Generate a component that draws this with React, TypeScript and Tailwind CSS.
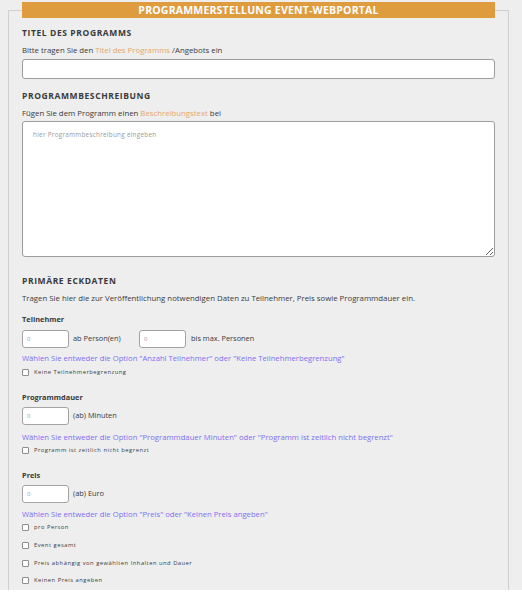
import React from "react";

// Programmerstellung: Formular für das Event-Webportal
const heading = "text-[8.5px] font-bold tracking-[0.6px] leading-[12px] text-[#3a3a3a] uppercase";
const para = "text-[7.8px] leading-[10px] text-[#3a3a3a]";
const label = "text-[7.4px] font-bold leading-[10px] text-[#3a3a3a]";
const hint = "text-[7.7px] leading-[10px] text-[#7f6ff3]";
const smallInput =
  "w-[47px] h-[18px] rounded-[3px] border border-[#a3a3a3] bg-white px-[4px] text-[6px] text-[#555] placeholder:text-[#9a9a9a] outline-none";

function Check({ text, className }: { text: string; className?: string }) {
  return (
    <label className={`flex items-center h-[10px] ${className ?? ""}`}>
      <span className="w-[7px] h-[7px] rounded-[1px] border border-[#8c8c8c] bg-white shrink-0" />
      <span className="ml-[5px] text-[5.8px] tracking-[0.5px] leading-[10px] text-[#3a3a3a]">{text}</span>
    </label>
  );
}

function NumberRow({ unit, unitWidth, children }: { unit: string; unitWidth?: string; children?: React.ReactNode }) {
  return (
    <div className="flex items-center">
      <input className={smallInput} placeholder="0" />
      <span className={`ml-[4px] text-[7.4px] text-[#3a3a3a] ${unitWidth ?? ""}`}>{unit}</span>
      {children}
    </div>
  );
}

export default function App() {
  return (
    <div
      className="h-[590px] overflow-hidden bg-[#eeeeee] pt-[2px]"
      style={{ fontFamily: '"Open Sans", "Liberation Sans", sans-serif' }}
    >
      <fieldset className="ml-[8px] mr-[13px] border border-b-0 border-[#cfcfcf] px-[13px] min-h-[700px]">
        <legend className="w-full h-[16px] bg-[#df9c3f] text-white text-center text-[10.5px] font-bold leading-[16px] tracking-[0.2px]">
          PROGRAMMERSTELLUNG EVENT-WEBPORTAL
        </legend>

        {/* Titel */}
        <h2 className={`${heading} mt-[9px]`}>Titel des Programms</h2>
        <p className={`${para} mt-[6px]`}>
          Bitte tragen Sie den <span className="text-[#e6a66a]">Titel des Programms</span> /Angebots ein
        </p>
        <input className="mt-[4px] block w-full h-[20px] rounded-[3px] border border-[#9c9c9c] bg-white outline-none" />

        {/* Beschreibung */}
        <h2 className={`${heading} mt-[11px]`}>Programmbeschreibung</h2>
        <p className={`${para} mt-[6px]`}>
          Fügen Sie dem Programm einen <span className="text-[#e6a66a]">Beschreibungstext</span> bei
        </p>
        <textarea
          className="mt-[3px] block w-full h-[136px] rounded-[3px] border border-[#9c9c9c] bg-white px-[10px] py-[8px] text-[6.3px] tracking-[0.3px] placeholder:text-[#9a9a9a] outline-none"
          placeholder="hier Programmbeschreibung eingeben"
        />

        {/* Eckdaten */}
        <h2 className={`${heading} mt-[18px]`}>Primäre Eckdaten</h2>
        <p className={`${para} mt-[6px]`}>
          Tragen Sie hier die zur Veröffentlichung notwendigen Daten zu Teilnehmer, Preis sowie Programmdauer ein.
        </p>

        <div className={`${label} mt-[11px]`}>Teilnehmer</div>
        <div className="mt-[6px]">
          <NumberRow unit="ab Person(en)" unitWidth="w-[66px]">
            <input className={smallInput} placeholder="0" />
            <span className="ml-[5px] text-[7.4px] text-[#3a3a3a]">bis max. Personen</span>
          </NumberRow>
        </div>
        <p className={`${hint} mt-[5px]`}>
          Wählen Sie entweder die Option "Anzahl Teilnehmer" oder "Keine Teilnehmerbegrenzung"
        </p>
        <Check text="Keine Teilnehmerbegrenzung" className="mt-[4px]" />

        <div className={`${label} mt-[15px]`}>Programmdauer</div>
        <div className="mt-[5px]">
          <NumberRow unit="(ab) Minuten" />
        </div>
        <p className={`${hint} mt-[7px]`}>
          Wählen Sie entweder die Option "Programmdauer Minuten" oder "Programm ist zeitlich nicht begrenzt"
        </p>
        <Check text="Programm ist zeitlich nicht begrenzt" className="mt-[3px]" />

        <div className={`${label} mt-[15px]`}>Preis</div>
        <div className="mt-[5px]">
          <NumberRow unit="(ab) Euro" />
        </div>
        <p className={`${hint} mt-[6px]`}>Wählen Sie entweder die Option "Preis" oder "Keinen Preis angeben"</p>
        <Check text="pro Person" className="mt-[3px]" />
        <Check text="Event gesamt" className="mt-[8px]" />
        <Check text="Preis abhängig von gewählten Inhalten und Dauer" className="mt-[8px]" />
        <Check text="Keinen Preis angeben" className="mt-[7px]" />
      </fieldset>
    </div>
  );
}
